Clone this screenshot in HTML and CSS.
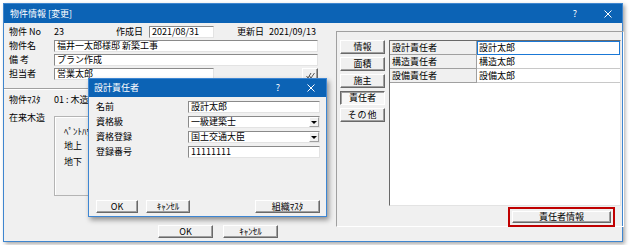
FILE: index.html
```html
<!DOCTYPE html>
<html lang="ja">
<head>
    <meta charset="utf-8">
    <title>物件情報 [変更]</title>
    <link rel="stylesheet" href="styles.css">
</head>
<body>
    <div class="window">
        <div class="titlebar">
            <span class="title">物件情報 [変更]</span>
            <span class="help">?</span>
            <svg class="close" width="8" height="8" viewBox="0 0 8 8"><path d="M0.5 0.5 L7.5 7.5 M7.5 0.5 L0.5 7.5" stroke="#fff" stroke-width="1"/></svg>
        </div>
        <div class="content">
            <div class="left">
                <div class="row">
                    <span class="label">物件 No</span>
                    <span class="no">23</span>
                    <span class="label-s">作成日</span>
                    <span class="field date">2021/08/31</span>
                    <span class="label-s upd">更新日</span>
                    <span>2021/09/13</span>
                </div>
                <div class="row">
                    <span class="label">物件名</span>
                    <span class="field wide">福井一太郎様邸 新築工事</span>
                </div>
                <div class="row">
                    <span class="label">備 考</span>
                    <span class="field wide">プラン作成</span>
                </div>
                <div class="row">
                    <span class="label">担当者</span>
                    <span class="field staff">営業太郎</span>
                    <span class="btn check">
                        <svg width="9" height="7" viewBox="0 0 9 7"><path d="M0.5 4 L2 6 L5 1 M3.5 4 L5 6 L8.5 1" stroke="#555" stroke-width="1" fill="none"/></svg>
                    </span>
                </div>
                <div class="separator"></div>
                <div class="row master">
                    <span class="label">物件ﾏｽﾀ</span>
                    <span>01 : 木造 :</span>
                </div>
                <div class="row-group">
                    <span class="label">在来木造</span>
                    <div class="groupbox">
                        <div class="g-line">ﾍﾟﾝﾄﾊｳｽ</div>
                        <div class="g-line up">地上</div>
                        <div class="g-line down">地下</div>
                    </div>
                </div>
                <div class="footer">
                    <span class="btn main-btn">OK</span>
                    <span class="btn main-btn">ｷｬﾝｾﾙ</span>
                </div>
            </div>

            <div class="panel">
                <div class="tabs">
                    <span class="btn tab">情報</span>
                    <span class="btn tab">面積</span>
                    <span class="btn tab">施主</span>
                    <span class="btn tab active">責任者</span>
                    <span class="btn tab spaced">その他</span>
                </div>
                <div class="grid">
                    <div class="cell head">設計責任者</div>
                    <div class="cell value current">設計太郎</div>
                    <div class="cell head">構造責任者</div>
                    <div class="cell value">構造太郎</div>
                    <div class="cell head">設備責任者</div>
                    <div class="cell value">設備太郎</div>
                </div>
                <span class="btn info highlight">責任者情報</span>
            </div>
        </div>

        <div class="dialog">
            <div class="titlebar small">
                <span class="title">設計責任者</span>
                <span class="help">?</span>
                <svg class="close" width="8" height="8" viewBox="0 0 8 8"><path d="M0.5 0.5 L7.5 7.5 M7.5 0.5 L0.5 7.5" stroke="#fff" stroke-width="1"/></svg>
            </div>
            <div class="d-body">
                <div class="d-row">
                    <span class="d-label">名前</span>
                    <span class="field d-field">設計太郎</span>
                </div>
                <div class="d-row">
                    <span class="d-label">資格級</span>
                    <span class="field d-field select">一級建築士<span class="arrow"></span></span>
                </div>
                <div class="d-row">
                    <span class="d-label">資格登録</span>
                    <span class="field d-field select">国土交通大臣<span class="arrow"></span></span>
                </div>
                <div class="d-row">
                    <span class="d-label">登録番号</span>
                    <span class="field d-field">11111111</span>
                </div>
                <div class="d-footer">
                    <span class="btn d-ok">OK</span>
                    <span class="btn d-cancel">ｷｬﾝｾﾙ</span>
                    <span class="btn d-org">組織ﾏｽﾀ</span>
                </div>
            </div>
        </div>
    </div>
</body>
</html>
```

FILE: styles.css
```css
body {
    margin: 0;
    padding: 3px;
    background-color: #fff;
    font-family: "Noto Sans CJK JP", "Noto Sans", sans-serif;
    font-size: 9px;
    line-height: 12px;
    color: #000;
}
.window {
    position: relative;
    box-sizing: border-box;
    width: 620px;
    height: 239px;
    border: 1px solid #3f86cf;
    background-color: #f0f0f0;
    box-shadow: 2px 2px 4px rgba(0, 0, 0, 0.35);
}
.titlebar {
    display: flex;
    align-items: center;
    height: 19px;
    padding: 0 10px 0 6px;
    background-color: #0c63b5;
    color: #fff;
}
.titlebar .help {
    margin-left: auto;
    margin-right: 27px;
}
.titlebar.small {
    height: 18px;
    padding: 0 11px 0 5px;
}
.titlebar.small .help {
    margin-right: 27px;
}
.content {
    display: flex;
    height: 218px;
}
.left {
    display: flex;
    flex-direction: column;
    box-sizing: border-box;
    width: 314px;
    padding: 3px 0 0 5px;
}
.row {
    display: flex;
    align-items: flex-start;
    height: 12px;
    margin-bottom: 2px;
}
.label {
    width: 45px;
    flex: none;
}
.no {
    width: 62px;
}
.label-s {
    width: 33px;
}
.upd {
    margin-left: 23px;
    width: 32px;
}
.field {
    box-sizing: border-box;
    height: 12px;
    padding-left: 2px;
    background-color: #fff;
    border: 1px solid;
    border-color: #8a8a8a #e3e3e3 #e3e3e3 #8a8a8a;
    line-height: 10px;
    white-space: nowrap;
    overflow: hidden;
}
.date {
    width: 65px;
}
.wide {
    flex: 1;
}
.staff {
    width: 160px;
}
.btn {
    display: flex;
    align-items: center;
    justify-content: center;
    box-sizing: border-box;
    background-color: #f0f0f0;
    border: 1px solid;
    border-color: #fff #696969 #696969 #fff;
    box-shadow: inset -1px -1px 0 #a0a0a0;
    white-space: nowrap;
}
.check {
    width: 16px;
    height: 14px;
    margin-left: auto;
}
.separator {
    margin-top: 6px;
    border-top: 1px solid #a0a0a0;
    border-bottom: 1px solid #fff;
    margin-left: -5px;
}
.master {
    margin-top: 4px;
}
.row-group {
    display: flex;
    align-items: flex-start;
    margin-top: 4px;
}
.groupbox {
    box-sizing: border-box;
    width: 264px;
    height: 80px;
    margin-top: 4px;
    padding: 9px 0 0 9px;
    border: 1px solid #b4b4b4;
    box-shadow: inset 1px 1px 0 #fff;
}
.g-line.up {
    margin-top: 2px;
}
.g-line.down {
    margin-top: 4px;
}
.footer {
    display: flex;
    gap: 10px;
    margin-top: auto;
    margin-left: 149px;
    padding-bottom: 3px;
}
.main-btn {
    width: 55px;
    height: 13px;
}
.panel {
    display: grid;
    grid-template-columns: 45px 232px;
    grid-template-rows: 166px auto;
    column-gap: 4px;
    row-gap: 5px;
    box-sizing: border-box;
    width: 288px;
    height: 196px;
    margin: 8px 0 0 18px;
    padding: 8px 2px 3px 3px;
    border: 1px solid;
    border-color: #a0a0a0 #fff #fff #a0a0a0;
}
.tabs {
    display: flex;
    flex-direction: column;
    gap: 3px;
}
.tab {
    height: 14px;
}
.tab.active {
    background-color: #f7f7f7;
    border-color: #696969 #fff #fff #696969;
    box-shadow: inset 1px 1px 0 #a0a0a0;
}
.tab.spaced {
    letter-spacing: 1px;
}
.grid {
    display: grid;
    grid-template-columns: 87px 1fr;
    grid-auto-rows: 14px;
    align-content: start;
    background-color: #fff;
    border: 1px solid;
    border-color: #696969 #e3e3e3 #e3e3e3 #696969;
}
.cell {
    box-sizing: border-box;
    padding-left: 2px;
    line-height: 13px;
    border-bottom: 1px solid #c8c8c8;
}
.cell.head {
    background-color: #f0f0f0;
    border-right: 1px solid #a0a0a0;
    border-bottom-color: #a0a0a0;
}
.cell.current {
    border: 1px solid #1a78d6;
    padding-left: 1px;
    line-height: 12px;
}
.info {
    grid-column: 2;
    justify-self: end;
    width: 99px;
    height: 12px;
    margin-right: 10px;
}
.highlight {
    outline: 2px solid #c00000;
    outline-offset: 2px;
}
.dialog {
    position: absolute;
    left: 84px;
    top: 74px;
    display: flex;
    flex-direction: column;
    box-sizing: border-box;
    width: 239px;
    height: 139px;
    border: 1px solid #3d86d3;
    background-color: #f0f0f0;
    box-shadow: 2px 3px 5px rgba(0, 0, 0, 0.4);
}
.d-body {
    display: flex;
    flex-direction: column;
    flex: 1;
    padding: 4px 6px 3px 7px;
}
.d-row {
    display: flex;
    height: 12px;
    margin-bottom: 3px;
}
.d-label {
    width: 92px;
}
.d-field {
    flex: 1;
    position: relative;
}
.select .arrow {
    position: absolute;
    right: 0;
    top: 0;
    box-sizing: border-box;
    width: 10px;
    height: 10px;
    background-color: #f0f0f0;
    border: 1px solid;
    border-color: #fff #a0a0a0 #a0a0a0 #fff;
}
.select .arrow::after {
    content: "";
    position: absolute;
    left: 1px;
    top: 3px;
    border-left: 3px solid transparent;
    border-right: 3px solid transparent;
    border-top: 3px solid #000;
}
.d-footer {
    display: flex;
    margin-top: auto;
}
.d-footer .btn {
    height: 13px;
}
.d-ok {
    width: 42px;
}
.d-cancel {
    width: 44px;
    margin-left: 8px;
}
.d-org {
    width: 65px;
    margin-left: auto;
}
```
